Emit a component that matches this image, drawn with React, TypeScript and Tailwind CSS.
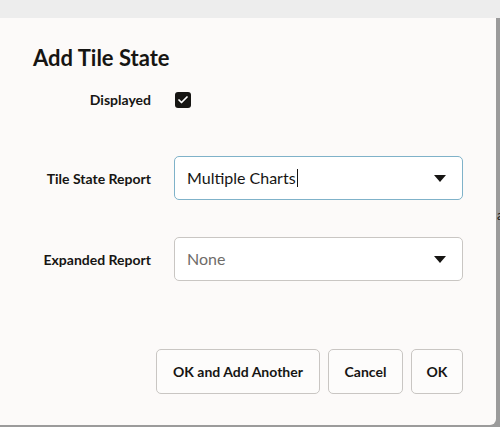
import { Check } from "lucide-react";

function Caret() {
  return (
    <svg width="12" height="7" viewBox="0 0 12 7" className="shrink-0">
      <path d="M0 0h12L6 7z" fill="#161513" />
    </svg>
  );
}

function SelectBox({ value, focused, placeholder }: { value: string; focused?: boolean; placeholder?: boolean }) {
  return (
    <div
      className={`flex h-11 w-[289px] items-center justify-between rounded-[5px] border bg-white pl-3 pr-4 ${
        focused ? "border-[#7fb2c9]" : "border-[#c9c6c3]"
      }`}
    >
      <span className={`flex items-center text-[16px] ${placeholder ? "text-[#6f6c69]" : "text-[#161513]"}`}>
        {value}
        {focused && <span className="ml-[1px] inline-block h-[18px] w-px bg-[#161513]" />}
      </span>
      <Caret />
    </div>
  );
}

function FormRow({ label, children }: { label: string; children: React.ReactNode }) {
  return (
    <div className="flex items-center">
      <div className="w-[151px] text-right text-[14px] font-bold text-[#161513]">{label}</div>
      <div className="ml-[23px]">{children}</div>
    </div>
  );
}

const buttons = [
  { label: "OK and Add Another", width: "w-[164px]" },
  { label: "Cancel", width: "w-[75px]" },
  { label: "OK", width: "w-[52px]" },
];

export default function App() {
  return (
    <div className="relative h-[427px] w-[500px] overflow-hidden bg-[#9b9b9b] font-['Lato',sans-serif]">
      <div className="h-[18px] bg-[#ededed]" />
      <div className="flex h-[407px] w-[496px] flex-col rounded-br-[6px] bg-[#fcfaf9]">
        <h1 className="ml-[33px] mt-[28px] text-[22px] font-bold leading-6 text-[#161513]">Add Tile State</h1>

        <div className="mt-[19px] flex items-center">
          <div className="w-[151px] text-right text-[14px] font-bold text-[#161513]">Displayed</div>
          <div className="ml-[24px] flex h-4 w-4 items-center justify-center rounded-[3px] bg-[#161513]">
            <Check className="h-3 w-3 text-white" strokeWidth={3.5} />
          </div>
        </div>

        <div className="mt-[46px]">
          <FormRow label="Tile State Report">
            <SelectBox value="Multiple Charts" focused />
          </FormRow>
        </div>

        <div className="mt-[37px]">
          <FormRow label="Expanded Report">
            <SelectBox value="None" placeholder />
          </FormRow>
        </div>

        <div className="mt-[68px] flex justify-end gap-2 pr-[33px]">
          {buttons.map((b) => (
            <button
              key={b.label}
              className={`h-[45px] ${b.width} rounded-[5px] border border-[#c9c6c3] bg-[#fdfcfb] text-[14px] font-bold text-[#161513]`}
            >
              {b.label}
            </button>
          ))}
        </div>
      </div>
      <span className="absolute left-[497px] top-[206px] text-[13px] text-[#161513]">a</span>
    </div>
  );
}
